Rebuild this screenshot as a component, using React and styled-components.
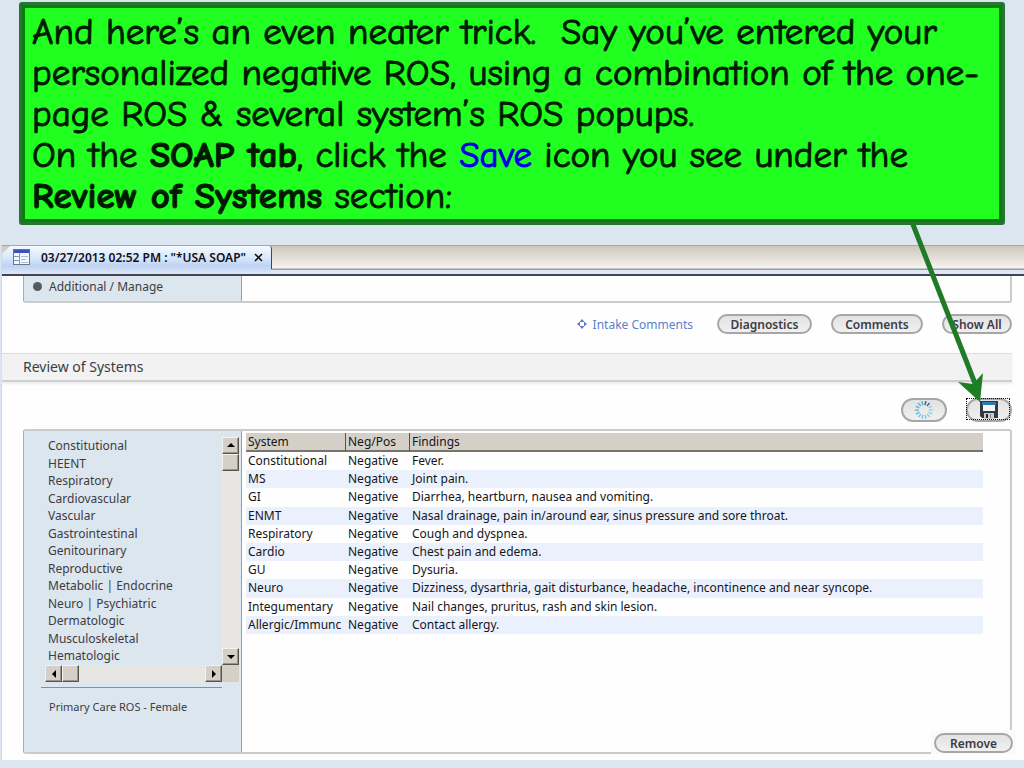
import React from "react";
import styled, { createGlobalStyle } from "styled-components";

const GlobalStyle = createGlobalStyle`
  * {
    box-sizing: border-box;
  }

  body {
    margin: 0;
    background-color: #dce6f0;
    font-family: "Segoe UI", "Noto Sans", "Open Sans", sans-serif;
    font-size: 12px;
    color: #3c3c44;
  }

  button {
    font-family: inherit;
    color: inherit;
    cursor: pointer;
  }
`;

const Page = styled.main`
  position: relative;
  padding: 2px 0 8px 0;
`;

const Callout = styled.section`
  margin: 0 19px 20px;
  padding: 7px 10px 5px;
  border: 3px solid #25772d;
  border-radius: 3px;
  box-shadow: inset 0 0 0 3px #0b7d10;
  background-color: #20ff20;
  color: #001a00;
  font-family: "Comic Sans MS", "Comic Neue", "Open Sans", sans-serif;
  font-size: 37px;
  line-height: 41px;
  -webkit-text-stroke: 1px currentColor;

  p {
    margin: 0;
  }
`;

const SaveWord = styled.span`
  color: #0000e6;
`;

const ArrowOverlay = styled.svg`
  position: absolute;
  top: 218px;
  right: 36px;
  pointer-events: none;
`;

const AppWindow = styled.div`
  margin-left: 1px;
  padding-bottom: 6px;
  background-color: #fefefe;
  border-left: 1px solid #d8d8d8;
`;

const TabStrip = styled.div`
  display: flex;
  height: 31px;
  border-top: 1px solid #aaa8a4;
  border-bottom: 2px solid #44444e;
  background: linear-gradient(#cdc7bb, #f6f4f0 22px, #9a9a9e 23px, #9a9a9e 24px, #dfe8f8 24px);
`;

const Tab = styled.div`
  display: flex;
  align-items: center;
  width: 270px;
  padding: 0 5px 5px 11px;
  border-right: 1px solid #44444e;
  border-top-right-radius: 3px;
  background: linear-gradient(#f4f9ff, #d8e7fb 12px, #bdd2f3 20px, #dfe8f8);
  clip-path: polygon(0 8px, 8px 0, 100% 0, 100% 23px, 269px 23px, 269px 100%, 0 100%);
  color: #111118;
  font-weight: 600;
`;

const TabTitle = styled.span`
  flex: 1;
  margin-left: 10px;
  white-space: nowrap;
`;

const CloseButton = styled.button`
  display: flex;
  padding: 2px;
  border: none;
  background: none;
`;

const Content = styled.div`
  padding-right: 12px;
`;

const Panel = styled.div`
  display: flex;
  margin-left: 21px;
  border: 2px solid #cbcbcb;
  border-radius: 3px;
  border-left: 1px solid #a8adb2;
  background-color: #fefefe;
`;

const ManagePanel = styled(Panel)`
  height: 27px;
  border-top: none;
  border-radius: 0 0 3px 3px;
`;

const SidePane = styled.div`
  flex: none;
  width: 218px;
  border-right: 1px solid #9aa0a6;
  background-color: #dce6ee;
`;

const ManageItem = styled.div`
  display: flex;
  align-items: center;
  gap: 7px;
  height: 20px;
  padding-left: 9px;
`;

const Bullet = styled.span`
  width: 9px;
  height: 9px;
  border-radius: 50%;
  background-color: #5a5a5e;
`;

const ActionRow = styled.div`
  display: flex;
  justify-content: flex-end;
  align-items: center;
  gap: 19px;
  padding: 11px 0 19px;
`;

const IntakeLink = styled.a`
  display: flex;
  align-items: center;
  gap: 6px;
  margin-right: 5px;
  color: #5c82c8;
  text-decoration: none;
`;

const PillButton = styled.button`
  display: flex;
  align-items: center;
  justify-content: center;
  width: ${(props) => props.$width}px;
  height: ${(props) => props.$height || 20}px;
  padding: 0;
  border: 2px solid #a6a6a6;
  border-radius: 12px;
  background: linear-gradient(#e2e2e2, #f0f0f0);
  font-size: 12px;
  font-weight: 600;
  white-space: nowrap;
`;

const SectionHeader = styled.h2`
  margin: 0;
  height: 29px;
  padding-left: 21px;
  border-top: 1px solid #dedede;
  border-bottom: 2px solid #cfcfcf;
  box-shadow: 0 2px 2px #ececec;
  background-color: #f2f2f2;
  font-size: 14px;
  font-weight: normal;
  line-height: 25px;
`;

const IconRow = styled.div`
  display: flex;
  justify-content: flex-end;
  gap: 19px;
  padding: 16px 0 7px;
`;

const SaveButton = styled(PillButton)`
  position: relative;

  &::after {
    content: "";
    position: absolute;
    top: -2px;
    left: -2px;
    width: 42px;
    height: 20px;
    border: 1px dotted #111;
  }
`;

const ReviewPanel = styled(Panel)`
  position: relative;
  min-height: 325px;
`;

const ScrollArea = styled.div`
  display: grid;
  grid-template-columns: 1fr 17px;
  grid-template-rows: 228px 17px;
  margin: 6px 2px 0 21px;
`;

const SystemList = styled.ul`
  display: grid;
  grid-auto-rows: 1fr;
  margin: 0;
  padding: 0 0 0 3px;
  list-style: none;
`;

const SystemButton = styled.button`
  display: block;
  padding: 0;
  border: none;
  background: none;
  font-size: 12px;
  line-height: 17px;
`;

const ScrollTrack = styled.div`
  display: flex;
  flex-direction: ${(props) => (props.$vertical ? "column" : "row")};
  background-color: #e8e6e2;
`;

const ScrollPart = styled.button`
  display: flex;
  align-items: center;
  justify-content: center;
  width: 17px;
  height: 17px;
  padding: 0;
  border: 1px solid;
  border-color: #f4f2ee #55534e #55534e #f4f2ee;
  box-shadow: inset -1px -1px 0 #98948c;
  background-color: #d4d0c8;

  &:last-child {
    margin: ${(props) => (props.$vertical ? "auto 0 0 0" : "0 0 0 auto")};
  }
`;

const ScrollCorner = styled.div`
  background-color: #d4d0c8;
`;

const Divider = styled.hr`
  margin: 5px 19px 0 17px;
  border: none;
  border-top: 1px solid #8a9096;
`;

const TemplateButton = styled(SystemButton)`
  margin: 10px 0 0 25px;
  font-size: 11px;
`;

const TableArea = styled.div`
  flex: 1;
  min-width: 0;
  padding: 2px 27px 0 4px;
`;

const FindingsTable = styled.table`
  width: 100%;
  height: 201px;
  table-layout: fixed;
  border-collapse: separate;
  border-spacing: 0;
  color: #15151c;
`;

const HeaderCell = styled.th`
  width: ${(props) => (props.$width ? `${props.$width}px` : "auto")};
  height: 19px;
  padding: 0 0 0 2px;
  border-bottom: 2px solid #77746c;
  border-right: ${(props) => (props.$width ? "1px solid #55534e" : "none")};
  background-color: #d4d0c8;
  font-weight: normal;
  line-height: 16px;
  text-align: left;
`;

const FindingRow = styled.tr`
  &:nth-child(even) {
    background-color: #ebf1fc;
  }
`;

const Cell = styled.td`
  padding: 0 0 0 2px;
  line-height: 16px;
  overflow: hidden;
  white-space: nowrap;
`;

const RemoveHolder = styled.div`
  position: absolute;
  right: -6px;
  bottom: -2px;
  padding: 3px 3px 1px;
  background-color: #fafafa;
`;

const systems = [
  "Constitutional",
  "HEENT",
  "Respiratory",
  "Cardiovascular",
  "Vascular",
  "Gastrointestinal",
  "Genitourinary",
  "Reproductive",
  "Metabolic | Endocrine",
  "Neuro | Psychiatric",
  "Dermatologic",
  "Musculoskeletal",
  "Hematologic",
];

const findings = [
  ["Constitutional", "Fever."],
  ["MS", "Joint pain."],
  ["GI", "Diarrhea, heartburn, nausea and vomiting."],
  ["ENMT", "Nasal drainage, pain in/around ear, sinus pressure and sore throat."],
  ["Respiratory", "Cough and dyspnea."],
  ["Cardio", "Chest pain and edema."],
  ["GU", "Dysuria."],
  ["Neuro", "Dizziness, dysarthria, gait disturbance, headache, incontinence and near syncope."],
  ["Integumentary", "Nail changes, pruritus, rash and skin lesion."],
  ["Allergic/Immunc", "Contact allergy."],
];

const triangles = {
  up: "0,5 8,5 4,1",
  down: "0,2 8,2 4,6",
  left: "6,0 6,8 2,4",
  right: "2,0 2,8 6,4",
};

const Triangle = ({ direction }) => (
  <svg width="8" height="8" viewBox="0 0 8 8" aria-hidden="true">
    <polygon points={triangles[direction]} fill="#000" />
  </svg>
);

const FormIcon = () => (
  <svg width="18" height="17" viewBox="0 0 18 17" aria-hidden="true">
    <rect x="0.5" y="0.5" width="16" height="15" fill="#f2f7fc" stroke="#6b7480" />
    <rect x="1" y="1" width="15" height="3" fill="#3a4fc0" />
    <path d="M6.5 4v11M1 7.500h5M1 11.500h5" stroke="#7f9ab8" />
    <path d="M8 7.500h7M8 10.500h5M8 13.500h7" stroke="#a9bdd2" />
  </svg>
);

const CloseIcon = () => (
  <svg width="10" height="9" viewBox="0 0 10 9" aria-hidden="true">
    <path d="M1 1l7 7M8 1l-7 7" stroke="#111" strokeWidth="1.6" />
  </svg>
);

const DiamondIcon = () => (
  <svg width="10" height="10" viewBox="0 0 10 10" fill="#5c78c8" aria-hidden="true">
    <path d="M5 0l2.500 3h-5zM5 10l2.500-3h-5zM0 5l3-2.500v5zM10 5L7 2.500v5z" />
  </svg>
);

const SpinnerIcon = () => (
  <svg width="20" height="20" viewBox="-10 -10 20 20" aria-hidden="true">
    {Array.from({ length: 14 }, (_, i) => (
      <line
        key={i}
        x1="0"
        y1="-5"
        x2="0"
        y2="-9"
        stroke={i < 2 ? "#2c6c98" : "#48b0de"}
        strokeWidth="1.500"
        opacity={i < 2 ? 1 : 0.3 + i * 0.05}
        transform={`rotate(${i * (360 / 14) + 12})`}
      />
    ))}
  </svg>
);

const FloppyIcon = () => (
  <svg width="18" height="18" viewBox="0 0 18 18" aria-hidden="true">
    <path d="M0 0h18v17H2l-2-2z" fill="#34383f" />
    <rect x="2" y="1" width="14" height="3" fill="#2f78b8" />
    <rect x="3" y="4" width="12" height="6" fill="#f2f6fa" />
    <rect x="4" y="12" width="10" height="6" fill="#c9cbce" />
    <rect x="6" y="13" width="2" height="4" fill="#25282d" />
    <rect x="10" y="13" width="1" height="4" fill="#85898e" />
  </svg>
);

export default function App() {
  return (
    <>
      <GlobalStyle />
      <Page>
        <Callout>
          <p>
            And here’s an even neater trick.&nbsp; Say you’ve entered your
            <br />
            personalized negative ROS, using a combination of the one-
            <br />
            page ROS &amp; several system’s ROS popups.
          </p>
          <p>
            On the <b>SOAP tab</b>, click the <SaveWord>Save</SaveWord> icon you see under the
            <br />
            <b>Review of Systems</b> section:
          </p>
        </Callout>

        <AppWindow>
          <TabStrip>
            <Tab>
              <FormIcon />
              <TabTitle>03/27/2013 02:52 PM : "*USA SOAP"</TabTitle>
              <CloseButton aria-label="Close tab">
                <CloseIcon />
              </CloseButton>
            </Tab>
          </TabStrip>

          <Content>
            <ManagePanel>
              <SidePane>
                <ManageItem>
                  <Bullet />
                  Additional / Manage
                </ManageItem>
              </SidePane>
            </ManagePanel>

            <ActionRow>
              <IntakeLink href="#intake">
                <DiamondIcon />
                Intake Comments
              </IntakeLink>
              <PillButton $width={95}>Diagnostics</PillButton>
              <PillButton $width={92}>Comments</PillButton>
              <PillButton $width={70}>Show All</PillButton>
            </ActionRow>

            <SectionHeader>Review of Systems</SectionHeader>

            <IconRow>
              <PillButton $width={46} $height={24} aria-label="Reload">
                <SpinnerIcon />
              </PillButton>
              <SaveButton $width={46} $height={24} aria-label="Save">
                <FloppyIcon />
              </SaveButton>
            </IconRow>

            <ReviewPanel>
              <SidePane>
                <ScrollArea>
                  <SystemList>
                    {systems.map((name) => (
                      <li key={name}>
                        <SystemButton>{name}</SystemButton>
                      </li>
                    ))}
                  </SystemList>
                  <ScrollTrack $vertical>
                    <ScrollPart aria-label="Scroll up">
                      <Triangle direction="up" />
                    </ScrollPart>
                    <ScrollPart aria-label="Vertical thumb" />
                    <ScrollPart $vertical aria-label="Scroll down">
                      <Triangle direction="down" />
                    </ScrollPart>
                  </ScrollTrack>
                  <ScrollTrack>
                    <ScrollPart aria-label="Scroll left">
                      <Triangle direction="left" />
                    </ScrollPart>
                    <ScrollPart aria-label="Horizontal thumb" />
                    <ScrollPart aria-label="Scroll right">
                      <Triangle direction="right" />
                    </ScrollPart>
                  </ScrollTrack>
                  <ScrollCorner />
                </ScrollArea>
                <Divider />
                <TemplateButton>Primary Care ROS - Female</TemplateButton>
              </SidePane>

              <TableArea>
                <FindingsTable>
                  <thead>
                    <tr>
                      <HeaderCell $width={100}>System</HeaderCell>
                      <HeaderCell $width={64}>Neg/Pos</HeaderCell>
                      <HeaderCell>Findings</HeaderCell>
                    </tr>
                  </thead>
                  <tbody>
                    {findings.map(([system, finding]) => (
                      <FindingRow key={system}>
                        <Cell>{system}</Cell>
                        <Cell>Negative</Cell>
                        <Cell>{finding}</Cell>
                      </FindingRow>
                    ))}
                  </tbody>
                </FindingsTable>
              </TableArea>

              <RemoveHolder>
                <PillButton $width={79}>Remove</PillButton>
              </RemoveHolder>
            </ReviewPanel>
          </Content>
        </AppWindow>

        <ArrowOverlay width="84" height="186" viewBox="0 0 84 186" aria-hidden="true">
          <path d="M8 4L72 168" stroke="#217a28" strokeWidth="5" />
          <path d="M76 184L54 164L69 166L79 155z" fill="#1c7f22" />
        </ArrowOverlay>
      </Page>
    </>
  );
}
